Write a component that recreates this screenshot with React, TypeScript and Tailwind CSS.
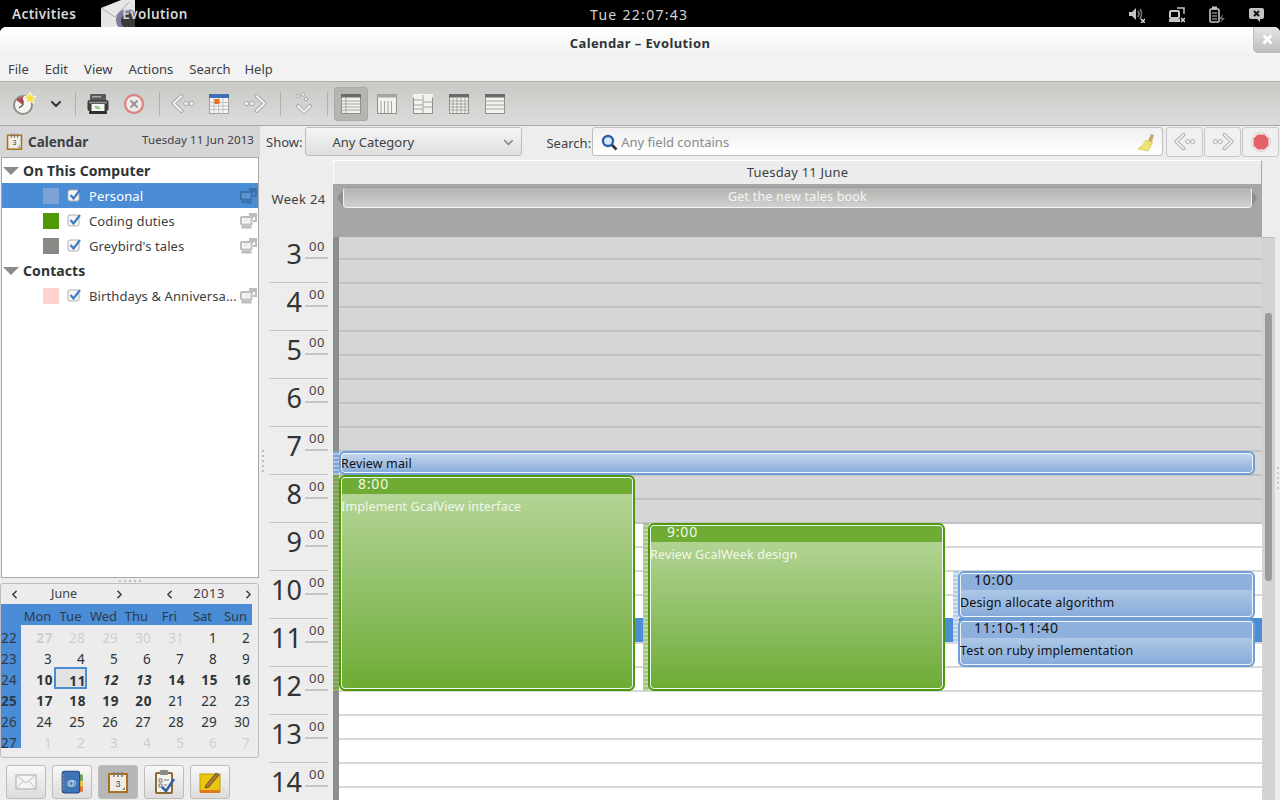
import { ChevronDown, ChevronLeft, ChevronRight } from 'lucide-react'
import type { ReactNode } from 'react'

const menus = ['File', 'Edit', 'View', 'Actions', 'Search', 'Help']
const hours = [3, 4, 5, 6, 7, 8, 9, 10, 11, 12, 13, 14]
const weekDays = ['Mon', 'Tue', 'Wed', 'Thu', 'Fri', 'Sat', 'Sun']

type Day = { n: number; kind?: 'dim' | 'bold' | 'italic' | 'today' | 'dimbold' }
const weeks: { week: number; bold?: boolean; days: Day[] }[] = [
  {
    week: 22,
    days: [
      { n: 27, kind: 'dimbold' },
      { n: 28, kind: 'dim' },
      { n: 29, kind: 'dim' },
      { n: 30, kind: 'dim' },
      { n: 31, kind: 'dim' },
      { n: 1 },
      { n: 2 },
    ],
  },
  { week: 23, days: [3, 4, 5, 6, 7, 8, 9].map((n) => ({ n })) },
  {
    week: 24,
    days: [
      { n: 10, kind: 'bold' },
      { n: 11, kind: 'today' },
      { n: 12, kind: 'italic' },
      { n: 13, kind: 'italic' },
      { n: 14, kind: 'bold' },
      { n: 15, kind: 'bold' },
      { n: 16, kind: 'bold' },
    ],
  },
  {
    week: 25,
    bold: true,
    days: [
      { n: 17, kind: 'bold' },
      { n: 18, kind: 'bold' },
      { n: 19, kind: 'bold' },
      { n: 20, kind: 'bold' },
      { n: 21 },
      { n: 22 },
      { n: 23 },
    ],
  },
  { week: 26, days: [24, 25, 26, 27, 28, 29, 30].map((n) => ({ n })) },
  { week: 27, days: [1, 2, 3, 4, 5, 6, 7].map((n) => ({ n, kind: 'dim' as const })) },
]

const dayClass = {
  dim: 'pr-[2px] text-[#cfcfcf]',
  dimbold: 'pr-px text-[#cfcfcf] font-bold tracking-[0.6px]',
  bold: 'pr-px font-bold tracking-[0.6px] text-[#2e3436]',
  italic: 'pr-px font-bold italic tracking-[0.6px] text-[#2e3436]',
  today: 'pr-px font-bold tracking-[0.6px] text-[#2e3436] bg-[#e2e2e2] outline-2 -outline-offset-2 outline-[#4a8cd6]',
}

function NewIcon() {
  return (
    <svg width="26" height="26" viewBox="0 0 26 26">
      <circle cx="12" cy="14" r="10" fill="#8f8f8b" />
      <circle cx="12" cy="14" r="8" fill="#f4f4f2" />
      <path d="M12 14 L5 9 A8 8 0 0 1 12 6 Z" fill="#b8474f" />
      <path d="M12 14 L12 9 M12 14 L8 17" stroke="#555" strokeWidth="1.2" />
      <path d="M19 1 L21 5 L25 5.600 L22 8.500 L23 12.500 L19 10.500 L15 12.500 L16 8.500 L13 5.600 L17 5 Z" fill="#f6dc3c" stroke="#fff" strokeWidth="0.8" />
    </svg>
  )
}

function PrintIcon() {
  return (
    <svg width="24" height="24" viewBox="0 0 24 24">
      <rect x="4" y="2" width="16" height="8" rx="1" fill="#5a5a5a" />
      <rect x="6" y="4" width="9" height="1.500" fill="#aaa" />
      <rect x="1.500" y="8" width="21" height="11" rx="2" fill="#3d3d3d" />
      <rect x="3" y="9.500" width="18" height="2" fill="#8a8a8a" />
      <rect x="5.500" y="12" width="13" height="7" fill="#f2f6ee" />
      <path d="M8 14 L12 14 L15 17 L10 17 Z" fill="#9cc48c" />
      <rect x="3" y="19" width="18" height="3" rx="1" fill="#2e2e2e" />
    </svg>
  )
}

function DeleteIcon() {
  return (
    <svg width="22" height="22" viewBox="0 0 22 22">
      <circle cx="11" cy="11" r="9" fill="#ececec" stroke="#dc8585" strokeWidth="2.400" />
      <path d="M7.500 7.500 L14.500 14.500 M14.500 7.500 L7.500 14.500" stroke="#9a9a9a" strokeWidth="2.400" />
    </svg>
  )
}

function BackIcon({ flip = false, size = 24 }: { flip?: boolean; size?: number }) {
  return (
    <svg width={size} height={size} viewBox="0 0 24 24" className={flip ? '-scale-x-100' : ''}>
      <path d="M10.500 4 L2.500 11.500 L10.500 19" fill="none" stroke="#a8a8a8" strokeWidth="3.800" strokeLinejoin="round" strokeLinecap="round" />
      <path d="M10.500 4 L2.500 11.500 L10.500 19" fill="none" stroke="#f6f6f6" strokeWidth="1.800" strokeLinejoin="round" strokeLinecap="round" />
      <circle cx="15" cy="11.500" r="2.200" fill="#f4f4f4" stroke="#a8a8a8" />
      <circle cx="20.500" cy="11.500" r="2.200" fill="#f4f4f4" stroke="#a8a8a8" />
    </svg>
  )
}

function TodayIcon() {
  return (
    <svg width="22" height="22" viewBox="0 0 22 22">
      <rect x="1.500" y="1.500" width="19" height="19" fill="#f6f6f4" stroke="#a0a0a0" />
      <rect x="1" y="1" width="20" height="4" fill="#3f70b4" />
      <path d="M1.500 9.500 H20.500 M1.500 13 H20.500 M1.500 16.500 H20.500 M6 5 V20.500 M10.500 5 V20.500 M15 5 V20.500" stroke="#c0c0c0" strokeWidth="1" />
      <rect x="6.500" y="6" width="5" height="5" fill="#e8711e" />
    </svg>
  )
}

function GotoIcon() {
  return (
    <svg width="24" height="24" viewBox="0 0 24 24">
      <circle cx="6" cy="4" r="1.700" fill="#f4f4f4" stroke="#a8a8a8" />
      <circle cx="11" cy="2.500" r="1.700" fill="#f4f4f4" stroke="#a8a8a8" />
      <circle cx="14" cy="7" r="1.700" fill="#f4f4f4" stroke="#a8a8a8" />
      <path d="M6 14 L12 20 L18 14" fill="none" stroke="#a8a8a8" strokeWidth="3.800" strokeLinejoin="round" strokeLinecap="round" />
      <path d="M6 14 L12 20 L18 14" fill="none" stroke="#f6f6f6" strokeWidth="1.800" strokeLinejoin="round" strokeLinecap="round" />
    </svg>
  )
}

function ViewIcon({ lines, head = '#6b6b6b' }: { lines: string; head?: string }) {
  return (
    <svg width="22" height="22" viewBox="0 0 22 22">
      <rect x="1.500" y="1.500" width="19" height="19" fill="#f2f2ef" stroke="#8e8e8a" />
      <rect x="1" y="1" width="20" height="3.500" fill={head} />
      <path d={lines} stroke="#a4a4a0" strokeWidth="1" fill="none" />
    </svg>
  )
}

function ComputerIcon({ color = '#bdbdbd' }: { color?: string }) {
  return (
    <svg width="17" height="16" viewBox="0 0 17 16">
      <rect x="1" y="4" width="10.500" height="7.500" rx="1" fill="#ffffff" fillOpacity="0.15" stroke={color} strokeWidth="2" />
      <rect x="3" y="4.500" width="6.500" height="5" fill={color} fillOpacity="0.25" />
      <rect x="1.500" y="12.500" width="10" height="3" fill={color} />
      <path d="M9 1 H16 V8 H13 M13 5 L11 3 H15" fill="none" stroke={color} strokeWidth="2" />
    </svg>
  )
}

function CheckIcon() {
  return (
    <svg width="15" height="15" viewBox="0 0 15 15">
      <rect x="1" y="2" width="11" height="11" rx="2" fill="#f6f6f6" stroke="#b0b0b0" />
      <path d="M3.500 7 L6.500 10.500 L13 2" fill="none" stroke="#3f7cc4" strokeWidth="2.200" />
    </svg>
  )
}

function BigCalendarIcon({ size = 22 }: { size?: number }) {
  return (
    <svg width={size} height={size} viewBox="0 0 22 22">
      <rect x="2" y="3" width="18" height="18" fill="#f0ede4" stroke="#a9701f" strokeWidth="2" />
      <path d="M7 1 V6 M11 1 V6 M15 1 V6" stroke="#777" strokeWidth="1.500" />
      <text x="11" y="16" textAnchor="middle" fontSize="9" fill="#444" fontFamily="Liberation Sans, sans-serif">3</text>
      <path d="M15 19 L18 16 V19 Z" fill="#888" />
    </svg>
  )
}

function Triangle() {
  return <span className="h-0 w-0 border-x-[8px] border-t-[8px] border-x-transparent border-t-[#8a8a8a]" />
}

function TreeGroup({ label }: { label: string }) {
  return (
    <div className="flex h-[25px] items-center gap-[4px] pl-[1px] text-[14px] font-bold tracking-[0.1px] text-[#2e3436]">
      <Triangle />
      <span>{label}</span>
    </div>
  )
}

function TreeRow({ color, label, selected }: { color: string; label: string; selected?: boolean }) {
  return (
    <div className={`flex h-[25px] items-center pl-[41px] pr-[1px] ${selected ? 'bg-[#4a8cd6] text-white' : 'text-[#3c4144]'}`}>
      <span className={`h-[16px] w-[16px] ${color}`} />
      <span className="ml-[8px]">
        <CheckIcon />
      </span>
      <span className="ml-[7px] flex-1 truncate pt-[2px] text-[13px] tracking-[0.1px]">{label}</span>
      <ComputerIcon color={selected ? '#3b70ad' : '#bdbdbd'} />
    </div>
  )
}

function ToolSep({ className }: { className: string }) {
  return <span className={`h-[24px] w-px bg-[#aeb0ac] ${className}`} />
}

function ToolSlot({ children, w = 36, active }: { children: ReactNode; w?: number; active?: boolean }) {
  return (
    <span
      style={{ width: w }}
      className={`flex h-[34px] items-center justify-center rounded-[3px] ${active ? 'border border-[#a8a8a8] bg-[#b4b6b2]' : ''}`}
    >
      {children}
    </span>
  )
}

function SwitcherButton({ children, active }: { children: ReactNode; active?: boolean }) {
  return (
    <span
      className={`flex h-[34px] w-[40px] items-center justify-center rounded-[3px] border border-[#bdbdbd] ${
        active ? 'bg-[#b7b7b7]' : 'bg-gradient-to-b from-[#f8f8f8] to-[#dcdcdc]'
      }`}
    >
      {children}
    </span>
  )
}

function CalEvent({
  className,
  time,
  title,
  tone,
}: {
  className: string
  time?: string
  title: string
  tone: 'green' | 'blue'
}) {
  const green = tone === 'green'
  return (
    <div
      className={`absolute rounded-[6px] border-2 ${className} ${
        green
          ? 'border-[#4e9a06] bg-gradient-to-b from-[#bad89c] to-[#6dab31] text-[#f2f7ec]'
          : 'border-[#72a0d6] bg-gradient-to-b from-[#c6d9ef] to-[#86abd9] text-[#101010]'
      }`}
    >
      <div className="flex h-full flex-col rounded-[4px] border border-[#eef4f8]">
        {time && (
          <div className={`h-[16px] shrink-0 rounded-t-[3px] text-[14px] leading-[12px] tracking-[0.8px] ${green ? 'bg-[#6eac34] pl-[16px]' : 'bg-[#8db0dc] pl-[13px]'}`}>
            {time}
          </div>
        )}
        <div className={`-ml-px text-[12.5px] tracking-[0.15px] ${time ? 'pt-[4px]' : 'leading-[19px]'}`}>{title}</div>
      </div>
    </div>
  )
}

export default function App() {
  return (
    <div className="flex h-[800px] w-[1280px] flex-col overflow-hidden bg-black font-['Noto_Sans',sans-serif] text-[13px] text-[#2e3436]">
      {/* gnome shell top bar */}
      <div className="relative flex h-[27px] shrink-0 items-center bg-black pt-[2px] text-[13.5px] text-[#d8d8d8]">
        <span className="ml-[12px] font-semibold tracking-[0.4px]">Activities</span>
        <span className="ml-[25px] flex items-center">
          <svg width="34" height="27" viewBox="0 0 34 27" className="-mr-[13px] -mt-[2px]">
            <path d="M0 8 L20 0 H34 V27 H0 Z" fill="#e6e6e6" />
            <path d="M0 8 L14 17 L28 2" fill="none" stroke="#a8a8a8" />
            <circle cx="26" cy="20" r="11" fill="#7f7c9c" />
            <circle cx="28" cy="21" r="8" fill="#3a3a3a" />
          </svg>
          <span className="relative font-semibold tracking-[0.4px]">Evolution</span>
        </span>
        <span className="absolute left-[590px] text-[14px] tracking-[1.3px] text-[#d4d4d4]">Tue 22:07:43</span>
        <div className="ml-auto flex items-center gap-[24px] pr-[16px]">
          <svg width="16" height="16" viewBox="0 0 16 16" fill="none">
            <path d="M0 5 H3 L7 1 V13 L3 9 H0 Z" fill="#c4c4c4" />
            <path d="M9 4 Q11 7 9 10 M11 2 Q14 7 11 12" stroke="#7a7a7a" strokeWidth="1.500" />
            <path d="M12 12 L16 16 M16 12 L12 16" stroke="#d8d8d8" strokeWidth="1.500" />
          </svg>
          <svg width="16" height="16" viewBox="0 0 16 16" fill="none">
            <rect x="1" y="4" width="9" height="7" rx="1" stroke="#c4c4c4" strokeWidth="2" />
            <rect x="0" y="12" width="11" height="3" fill="#c4c4c4" />
            <path d="M8 1 H15 V7" stroke="#c4c4c4" strokeWidth="1.500" />
            <path d="M12 11 L16 15 M16 11 L12 15" stroke="#d8d8d8" strokeWidth="1.500" />
          </svg>
          <svg width="16" height="18" viewBox="0 0 16 18" fill="none">
            <rect x="1" y="3" width="9" height="13" rx="1" stroke="#c4c4c4" strokeWidth="1.600" />
            <rect x="3" y="0.500" width="5" height="3" fill="#c4c4c4" />
            <path d="M3 7 H8 M3 10 H8 M3 13 H8" stroke="#c4c4c4" />
            <path d="M14 8 L10 13 H13 L11 17 L16 12 H13 Z" fill="#777" />
          </svg>
          <svg width="15" height="16" viewBox="0 0 15 16">
            <path d="M2 1 H13 Q15 1 15 3 V10 Q15 12 13 12 H11 V15 L8 12 H2 Q0 12 0 10 V3 Q0 1 2 1 Z" fill="#c4c4c4" />
            <path d="M5 4 L10 9 M10 4 L5 9" stroke="#111" strokeWidth="2" />
          </svg>
        </div>
      </div>

      {/* window */}
      <div className="flex flex-1 flex-col overflow-hidden rounded-t-[6px] bg-[#ededed]">
        <div className="relative flex h-[28px] shrink-0 items-center justify-center bg-gradient-to-b from-[#ffffff] to-[#f2f2f2] pt-[5px] text-[13px] font-bold tracking-[0.4px] text-[#2e3436]">
          Calendar – Evolution
          <span className="absolute right-0 top-0 flex h-[26px] w-[27px] items-center justify-center rounded-bl-[5px] border-b border-l border-[#bcbcbc] bg-gradient-to-b from-[#e6e6e6] to-[#bdbdbd]">
            <svg width="11" height="11" viewBox="0 0 11 11">
              <path d="M1.500 1.500 L9.500 9.500 M9.500 1.500 L1.500 9.500" stroke="#fff" strokeWidth="2.600" />
            </svg>
          </span>
        </div>
        <div className="flex h-[27px] shrink-0 items-center gap-[16px] border-b border-[#aeb0ac] bg-[#f2f2f2] pl-[8px] pt-[4px] text-[13px] text-[#3c4144]">
          {menus.map((m) => (
            <span key={m} className="last:-ml-[2px]">{m}</span>
          ))}
        </div>

        {/* toolbar */}
        <div className="flex h-[44px] shrink-0 items-center border-b border-[#a8aaa6] bg-gradient-to-b from-[#c8cac6] to-[#dcdcda] pl-[6px]">
          <ToolSlot><NewIcon /></ToolSlot>
          <ToolSlot w={28}><ChevronDown size={16} strokeWidth={3} color="#333" /></ToolSlot>
          <ToolSep className="ml-[5px] mr-[4px]" />
          <ToolSlot><PrintIcon /></ToolSlot>
          <ToolSlot><DeleteIcon /></ToolSlot>
          <ToolSep className="ml-[7px] mr-[5px]" />
          <ToolSlot><BackIcon /></ToolSlot>
          <ToolSlot><TodayIcon /></ToolSlot>
          <ToolSlot><BackIcon flip /></ToolSlot>
          <ToolSep className="ml-[7px] mr-[5px]" />
          <ToolSlot><GotoIcon /></ToolSlot>
          <ToolSep className="ml-[5px] mr-[6px]" />
          <ToolSlot w={34} active><ViewIcon lines="M1.500 8 H20.500 M1.500 11 H20.500 M1.500 14 H20.500 M1.500 17 H20.500 M6 4 V20" /></ToolSlot>
          <span className="w-px" />
          <ToolSlot><ViewIcon head="#a4a4a0" lines="M5 8 V20 M8.500 8 V20 M12 8 V20 M15.500 8 V20" /></ToolSlot>
          <ToolSlot><ViewIcon head="#f2f2ef" lines="M11 2 V20 M2 7 H11 M2 12 H11 M2 16 H11 M11 9 H20 M11 14 H20" /></ToolSlot>
          <ToolSlot><ViewIcon lines="M1.500 8 H20.500 M1.500 11 H20.500 M1.500 14 H20.500 M1.500 17 H20.500 M5 4 V20 M9 4 V20 M13 4 V20 M17 4 V20" /></ToolSlot>
          <ToolSlot><ViewIcon lines="M1.500 8 H20.500 M1.500 12 H20.500 M1.500 16 H20.500" /></ToolSlot>
        </div>

        <div className="flex min-h-0 flex-1">
          {/* left pane */}
          <div className="flex w-[260px] shrink-0 flex-col">
            <div className="flex h-[31px] shrink-0 items-center bg-[#d6d6d6] pl-[6px] pr-[6px]">
              <BigCalendarIcon size={17} />
              <span className="ml-[5px] pt-px text-[13.5px] font-bold text-[#3c4144]">Calendar</span>
              <span className="-mt-[3px] ml-auto text-[11.5px] tracking-[0.1px] text-[#3c4144]">Tuesday 11 Jun 2013</span>
            </div>
            <div className="mx-[1px] h-[421px] shrink-0 border border-[#a8a8a8] bg-white">
              <TreeGroup label="On This Computer" />
              <TreeRow color="bg-[#7da3d4]" label="Personal" selected />
              <TreeRow color="bg-[#4e9a06]" label="Coding duties" />
              <TreeRow color="bg-[#888a85]" label="Greybird's tales" />
              <TreeGroup label="Contacts" />
              <TreeRow color="bg-[#ffd2d2]" label="Birthdays & Anniversa..." />
            </div>
            <div className="flex h-[5px] shrink-0 items-center justify-center gap-[3px]">
              {[0, 1, 2, 3, 4].map((d) => (
                <span key={d} className="h-[2px] w-[2px] bg-[#bdbdbd]" />
              ))}
            </div>
            <div className="mr-[1px] h-[175px] shrink-0 rounded-[3px] border border-[#bdbdbd] bg-[#ececec]">
              <div className="flex h-[20px] items-center text-[#3c4144]">
                <span className="ml-[7px]"><ChevronLeft size={13} strokeWidth={3} /></span>
                <span className="w-[92px] pr-[6px] text-center text-[12.5px]">June</span>
                <ChevronRight size={13} strokeWidth={3} />
                <span className="ml-[37px]"><ChevronLeft size={13} strokeWidth={3} /></span>
                <span className="w-[66px] text-center text-[13px] tracking-[0.5px]">2013</span>
                <ChevronRight size={13} strokeWidth={3} />
              </div>
              <div className="flex h-[21px] w-[251px] items-center bg-[#4a8cd6] pl-[20px] pt-[5px] text-[13px] text-[#2e3a48]">
                {weekDays.map((d) => (
                  <span key={d} className="w-[33px] text-center">{d}</span>
                ))}
              </div>
              {weeks.map((w) => (
                <div key={w.week} className="flex h-[21px] w-[251px] text-[13.5px] tracking-[0.2px]">
                  <span className={`w-[20px] bg-[#4a8cd6] pt-[3px] text-[#2e3a48] ${w.week === 27 ? 'h-[18px]' : 'h-[21px]'} ${w.bold ? 'font-bold' : ''}`}>
                    {w.week}
                  </span>
                  {w.days.map((d, i) => (
                    <span
                      key={i}
                      className={`flex w-[33px] items-center justify-end ${d.kind === 'today' ? 'h-[22px]' : 'h-[21px]'} ${d.kind ? dayClass[d.kind] : 'pr-[2px] text-[#2e3436]'}`}
                    >
                      <span className="pt-[6px]">{d.n}</span>
                    </span>
                  ))}
                </div>
              ))}
            </div>
            <div className="flex flex-1 items-start gap-[6px] pl-[6px] pt-[7px]">
              <SwitcherButton>
                <svg width="22" height="18" viewBox="0 0 22 18">
                  <rect x="1" y="2" width="20" height="14" fill="#f6f6f6" stroke="#aaa" />
                  <path d="M1 2 L11 10 L21 2 M1 16 L8 8 M21 16 L14 8" fill="none" stroke="#bcbcbc" />
                </svg>
              </SwitcherButton>
              <SwitcherButton>
                <svg width="26" height="26" viewBox="0 0 24 24">
                  <rect x="18" y="5" width="4" height="6" fill="#6aa84f" />
                  <rect x="18" y="11" width="4" height="5" fill="#f1c232" />
                  <rect x="18" y="16" width="4" height="5" fill="#e8711e" />
                  <rect x="3" y="2" width="16" height="20" rx="2" fill="#3e74b8" stroke="#204a87" />
                  <path d="M2 6 H5 M2 9 H5 M2 12 H5 M2 15 H5 M2 18 H5" stroke="#888" strokeWidth="1.500" />
                  <text x="11.500" y="15.500" textAnchor="middle" fontSize="9" fontWeight="bold" fill="#dfe8f4" fontFamily="Liberation Sans, sans-serif">@</text>
                </svg>
              </SwitcherButton>
              <SwitcherButton active><BigCalendarIcon size={22} /></SwitcherButton>
              <SwitcherButton>
                <svg width="24" height="26" viewBox="0 0 24 26">
                  <rect x="4" y="4" width="16" height="20" rx="1" fill="#f4f2ec" stroke="#8f6a33" strokeWidth="2" />
                  <rect x="8" y="1" width="8" height="5" rx="1" fill="#8a8a8a" />
                  <path d="M7 10 H10 V13 H7 Z M12 11 H17 M7 15 H10 V18 H7 Z M12 16 H15" fill="none" stroke="#777" />
                  <path d="M10 18 L14 22 L22 10" fill="none" stroke="#2f64aa" strokeWidth="2.600" />
                </svg>
              </SwitcherButton>
              <SwitcherButton>
                <svg width="24" height="24" viewBox="0 0 24 24">
                  <rect x="2" y="4" width="20" height="18" fill="#e8c80e" stroke="#c29a08" />
                  <rect x="2" y="20" width="20" height="3" fill="#e07a1e" />
                  <path d="M8 15 L18 3 L21 5 L11 17 L7 18 Z" fill="#a9773a" stroke="#5a4020" strokeWidth="0.800" />
                </svg>
              </SwitcherButton>
            </div>
          </div>

          {/* right pane */}
          <div className="flex min-w-0 flex-1 flex-col">
            <div className="flex h-[33px] shrink-0 items-start pt-[1px] text-[13px] text-[#3c4144]">
              <span className="ml-[6px] mt-[6px]">Show:</span>
              <span className="ml-[3px] flex h-[29px] w-[217px] items-center justify-between rounded-[3px] border border-[#bdbdbd] bg-gradient-to-b from-[#f6f6f6] to-[#dedede] pl-[26px] pr-[5px] pt-[2px]">
                Any Category
                <ChevronDown size={15} strokeWidth={2.500} color="#8a8a8a" />
              </span>
              <span className="ml-[24px] mt-[7px]">Search:</span>
              <span className="ml-[1px] flex h-[29px] w-[571px] items-center rounded-[3px] border border-[#bdbdbd] bg-gradient-to-b from-[#f0f0f0] to-[#ffffff] pl-[8px] pr-[7px] pt-[2px] text-[#8a8a8a]">
                <svg width="17" height="17" viewBox="0 0 17 17">
                  <circle cx="7" cy="7" r="5" fill="#dbe8f6" stroke="#2c62ac" strokeWidth="2.400" />
                  <path d="M11 11 L15.500 15.500" stroke="#333" strokeWidth="2.600" />
                </svg>
                <span className="ml-[3px]">Any field contains</span>
                <svg width="18" height="20" viewBox="0 0 18 20" className="ml-auto">
                  <path d="M11 8 L14 1 L17 2 L15 9 Z" fill="#c9a46a" />
                  <path d="M9 7 L15.500 10 L11 18 L1 16 Q6 13 9 7 Z" fill="#ece27a" stroke="#d9c94a" strokeWidth="0.800" />
                </svg>
              </span>
              <span className="ml-[3px] flex h-[30px] w-[37px] items-center justify-center rounded-[3px] border border-[#c8c8c8] bg-[#f0f0f0]"><BackIcon size={22} /></span>
              <span className="ml-[1px] flex h-[30px] w-[37px] items-center justify-center rounded-[3px] border border-[#c8c8c8] bg-[#f0f0f0]"><BackIcon flip size={22} /></span>
              <span className="ml-[1px] flex h-[30px] w-[37px] items-center justify-center rounded-[3px] border border-[#c8c8c8] bg-[#f0f0f0]">
                <svg width="20" height="20" viewBox="0 0 20 20">
                  <circle cx="10" cy="10" r="9.500" fill="#f8f8f8" stroke="#cfcfcf" />
                  <path d="M6.500 2.500 H13.500 L17.500 6.500 V13.500 L13.500 17.500 H6.500 L2.500 13.500 V6.500 Z" fill="#e4626a" />
                </svg>
              </span>
            </div>

            {/* day header + all day band */}
            <div className="flex h-[78px] shrink-0 pt-[1px]">
              <div className="flex w-[73px] shrink-0 items-start justify-center pl-[4px] pt-[30px] text-[13px] tracking-[0.3px] text-[#3c4144]">
                Week 24
              </div>
              <div className="flex w-[929px] shrink-0 flex-col">
                <div className="flex h-[24px] shrink-0 items-center justify-center border-l border-r border-t border-r-[#a8a8a8] border-l-white border-t-white bg-[#ececec] text-[13px] tracking-[0.2px] text-[#3c4144]">
                  Tuesday 11 June
                </div>
                <div className="flex-1 bg-[#a6a6a6] pl-[4px] pr-[5px] pt-[3px]">
                  <div className="flex h-[21px] items-center">
                    <span className="h-0 w-0 border-y-[8px] border-r-[6px] border-y-transparent border-r-[#8e8e8e]" />
                    <div className="flex h-[21px] flex-1 items-center justify-center rounded-[4px] border border-[#f2f2f2] border-t-[#9a9a9a] bg-gradient-to-b from-[#b4b4b2] to-[#d0d0ce] text-[12.5px] tracking-[0.2px] text-[#f4f4f4]">
                      Get the new tales book
                    </div>
                    <span className="h-0 w-0 border-y-[8px] border-l-[5px] border-y-transparent border-l-[#8e8e8e]" />
                  </div>
                </div>
              </div>
            </div>

            {/* time column + day canvas */}
            <div className="relative flex min-h-0 flex-1 overflow-hidden">
              <div className="relative w-[73px] shrink-0 overflow-hidden">
                <div className="-mt-[2px]">
                  {hours.map((h) => (
                    <div key={h} className="ml-[9px] mr-[5px] flex h-[48px] justify-end border-b border-[#c4c4c4]">
                      <span className="mr-[3px] mt-[2px] text-[27px] leading-[34px] text-[#333]">{h}</span>
                      <span className="h-[24px] w-[23px] border-b-2 border-[#c4c4c4] pl-[4px] pt-[3px] text-[13px] leading-[16px] tracking-[0.6px] text-[#444]">00</span>
                    </div>
                  ))}
                </div>
                <div className="absolute left-[2px] top-[213px] flex flex-col gap-[3px]">
                  {[0, 1, 2, 3, 4].map((d) => (
                    <span key={d} className="h-[2px] w-[2px] bg-[#bdbdbd]" />
                  ))}
                </div>
              </div>

              <div className="relative w-[929px] shrink-0 overflow-hidden bg-white">
                <div className="-mt-px">
                  {Array.from({ length: 24 }, (_, i) => {
                    const off = i < 12
                    const selected = i === 16
                    return (
                      <div
                        key={i}
                        className={`h-[24px] border-b-2 ${
                          off
                            ? 'border-[#c2c2c2] bg-[#d6d6d6]'
                            : selected
                              ? 'border-[#d8d8d8] bg-[#4a8cd6]'
                              : i === 15
                                ? 'border-[#4a8cd6] bg-white'
                                : 'border-[#d8d8d8] bg-white'
                        }`}
                      />
                    )
                  })}
                </div>
                {/* busy strips */}
                <div className="absolute left-0 top-0 h-full w-[6px] bg-[#8c8e8a]" />
                <div className="absolute left-0 top-[214px] h-[24px] w-[6px] bg-[repeating-linear-gradient(180deg,#7ba3d6_0,#7ba3d6_2px,#a9c4e4_2px,#a9c4e4_4px)]" />
                <div className="absolute left-0 top-[238px] h-[216px] w-[6px] bg-[repeating-linear-gradient(180deg,#7aa04e_0,#7aa04e_2px,#93b072_2px,#93b072_4px)]" />
                <div className="absolute left-[310px] top-[286px] h-[168px] w-[6px] bg-[repeating-linear-gradient(180deg,#a3c284_0,#a3c284_2px,#c2d6ae_2px,#c2d6ae_4px)]" />
                <div className="absolute left-[620px] top-[334px] h-[72px] w-[6px] bg-[repeating-linear-gradient(180deg,#b4cbe6_0,#b4cbe6_2px,#d4e1f0_2px,#d4e1f0_4px)]" />

                <CalEvent tone="blue" title="Review mail" className="left-[6px] top-[214px] h-[24px] w-[916px]" />
                <CalEvent tone="green" time="8:00" title="Implement GcalView interface" className="left-[6px] top-[238px] h-[216px] w-[296px]" />
                <CalEvent tone="green" time="9:00" title="Review GcalWeek design" className="left-[315px] top-[286px] h-[168px] w-[297px]" />
                <CalEvent tone="blue" time="10:00" title="Design allocate algorithm" className="left-[625px] top-[334px] h-[48px] w-[297px]" />
                <CalEvent tone="blue" time="11:10-11:40" title="Test on ruby implementation" className="left-[625px] top-[382px] h-[48px] w-[297px]" />
              </div>

              <div className="w-[13px] shrink-0 border-t border-[#bdbdbd] bg-[#d3d3d3] pl-[3px] pt-[75px]">
                <div className="h-[268px] w-[7px] rounded-[3px] bg-[#9b9b9b]" />
              </div>
              <div className="relative flex-1">
                <div className="absolute left-[2px] top-[230px] flex flex-col gap-[3px]">
                  {[0, 1, 2, 3, 4].map((d) => (
                    <span key={d} className="h-[2px] w-[2px] bg-[#c8c8c8]" />
                  ))}
                </div>
              </div>
            </div>
          </div>
        </div>
      </div>
    </div>
  )
}
